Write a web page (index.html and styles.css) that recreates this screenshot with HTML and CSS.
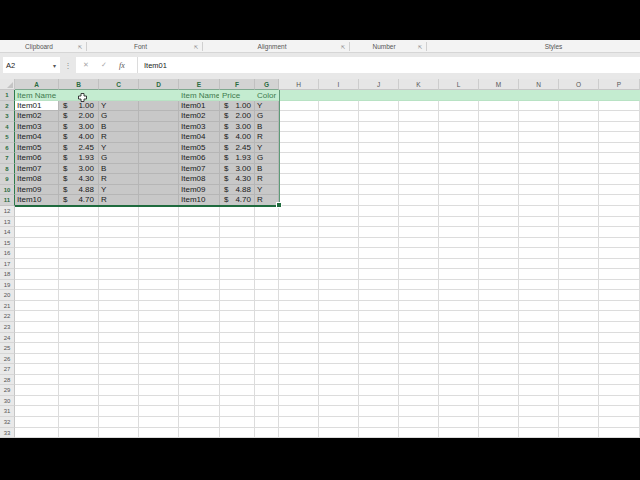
FILE: index.html
```html
<!DOCTYPE html>
<html lang="en">
<head>
  <meta charset="UTF-8">
  <title>Book1 - Excel</title>
  <link rel="stylesheet" href="styles.css">
</head>
<body>
  <div class="screen">
    <div class="topbar"></div>

    <div class="ribbon-labels">
      <div class="group g-clipboard"><span class="label">Clipboard</span><span class="launcher">&#8689;</span></div>
      <div class="group g-font"><span class="label">Font</span><span class="launcher">&#8689;</span></div>
      <div class="group g-align"><span class="label">Alignment</span><span class="launcher">&#8689;</span></div>
      <div class="group g-number"><span class="label">Number</span><span class="launcher">&#8689;</span></div>
      <div class="group g-styles"><span class="label">Styles</span></div>
    </div>

    <div class="formula-band">
      <div class="name-box">
        <span>A2</span>
        <span class="caret">&#9662;</span>
      </div>
      <span class="grip">&#8942;</span>
      <div class="formula-box">
        <div class="fx-buttons">
          <span class="fx-btn">&#10005;</span>
          <span class="fx-btn">&#10003;</span>
          <span class="fx-btn fx">fx</span>
        </div>
        <div class="formula-text">Item01</div>
      </div>
    </div>

    <div class="sheet-wrap">
      <div class="sheet" id="sheet"></div>
      <!-- range outline A1:G11 -->
      <div class="selection"><span class="fill-handle"></span></div>
      <svg class="cursor" width="9" height="9" viewBox="0 0 9 9"><path d="M3 0.5h3v2.5h2.5v3H6v2.5H3V6H0.5V3H3z" fill="#fff" stroke="#111" stroke-width="0.8"/></svg>
    </div>
  </div>

  <script>
    const sheet = document.getElementById('sheet');
    const cols = ['A', 'B', 'C', 'D', 'E', 'F', 'G', 'H', 'I', 'J', 'K', 'L', 'M', 'N', 'O', 'P'];

    const items = [
      ['Item01', '1.00', 'Y'],
      ['Item02', '2.00', 'G'],
      ['Item03', '3.00', 'B'],
      ['Item04', '4.00', 'R'],
      ['Item05', '2.45', 'Y'],
      ['Item06', '1.93', 'G'],
      ['Item07', '3.00', 'B'],
      ['Item08', '4.30', 'R'],
      ['Item09', '4.88', 'Y'],
      ['Item10', '4.70', 'R']
    ];

    function cell(className, html) {
      const div = document.createElement('div');
      div.className = className;
      if (html) div.innerHTML = html;
      sheet.appendChild(div);
    }

    function money(value) {
      return `<span>$</span><span>${value}</span>`;
    }

    // column headers
    cell('corner', '<span class="corner-mark"></span>');
    cols.forEach((c, i) => cell(i < 7 ? 'col-head selected' : 'col-head', c));

    // rows
    for (let r = 1; r <= 33; r++) {
      cell(r <= 11 ? 'row-head selected' : 'row-head', r);

      cols.forEach((c, i) => {
        let cls = 'cell';
        let content = '';

        if (r === 1) {
          cls += ' title-row';
          if (c === 'A' || c === 'E') content = 'Item Name';
          if (c === 'F') content = 'Price';
          if (c === 'G') content = 'Color';
        } else if (r <= 11) {
          const item = items[r - 2];
          if (i < 7) cls += r === 2 && c === 'A' ? ' active' : ' in-range';
          if (c === 'A' || c === 'E') content = item[0];
          if (c === 'B') { cls += ' money wide'; content = money(item[1]); }
          if (c === 'F') { cls += ' money'; content = money(item[1]); }
          if (c === 'C' || c === 'G') content = item[2];
        }

        cell(cls, content);
      });
    }
  </script>
</body>
</html>
```

FILE: styles.css
```css
body {
  margin: 0;
  background-color: #000;
  font-family: "Liberation Sans", Arial, sans-serif;
}

.screen {
  width: 640px;
  height: 480px;
  overflow: hidden;
  background-color: #000;
}

.topbar {
  height: 40px;
}

/* ribbon group captions */
.ribbon-labels {
  display: flex;
  height: 12px;
  background-color: #f3f3f3;
  border-bottom: 1px solid #d6d6d6;
  font-size: 6.5px;
  color: #555;
}

.group {
  display: flex;
  align-items: center;
  border-right: 1px solid #d0d0d0;
  margin: 2px 0 1px;
}

.group .label {
  flex: 1;
  text-align: center;
}

.group .launcher {
  width: 8px;
  font-size: 5px;
  color: #8a8a8a;
}

.g-clipboard { width: 86px; }
.g-font { width: 115px; }
.g-align { width: 146px; }
.g-number { width: 76px; }
.g-styles { flex: 1; border-right: none; padding-left: 40px; }

/* name box and formula bar */
.formula-band {
  display: flex;
  align-items: center;
  height: 26px;
  padding: 0 0 2px 3px;
  box-sizing: border-box;
  background-color: #e8e8e8;
}

.name-box {
  display: flex;
  align-items: center;
  justify-content: space-between;
  width: 57px;
  height: 16px;
  padding: 0 4px 0 3px;
  box-sizing: border-box;
  background-color: #fff;
  font-size: 7.5px;
  color: #222;
}

.name-box .caret {
  font-size: 6px;
  color: #555;
}

.grip {
  width: 16px;
  text-align: center;
  font-size: 8px;
  color: #8f8f8f;
}

.formula-box {
  flex: 1;
  display: flex;
  align-items: center;
  height: 16px;
  background-color: #fff;
}

.fx-buttons {
  display: flex;
  align-items: center;
  gap: 12px;
  width: 62px;
  height: 16px;
  padding-left: 7px;
  box-sizing: border-box;
  border-right: 1px solid #dcdcdc;
}

.fx-btn {
  font-size: 7px;
  color: #a8a8a8;
}

.fx-btn.fx {
  font-family: "Liberation Serif", serif;
  font-style: italic;
  color: #555;
  font-size: 8px;
}

.formula-text {
  padding-left: 6px;
  font-size: 7.5px;
  color: #222;
}

/* worksheet grid */
.sheet-wrap {
  position: relative;
}

.sheet {
  display: grid;
  grid-template-columns: 15px 44px 40px 40px 40px 41px 35px 24px repeat(8, 40px) 41px;
  grid-template-rows: 11px repeat(33, 10.55px);
  background-color: #fff;
  font-size: 8px;
  color: #1a1a1a;
}

.sheet > div {
  box-sizing: border-box;
  overflow: hidden;
  white-space: nowrap;
}

.corner {
  background-color: #e6e6e6;
  border-right: 1px solid #c6c6c6;
  border-bottom: 1px solid #c6c6c6;
  position: relative;
}

.corner-mark {
  position: absolute;
  right: 1px;
  bottom: 1px;
  border-left: 6px solid transparent;
  border-bottom: 6px solid #c4c4c4;
}

.col-head {
  background-color: #e6e6e6;
  border-right: 1px solid #cdcdcd;
  border-bottom: 1px solid #c6c6c6;
  text-align: center;
  font-size: 6.5px;
  line-height: 11px;
  color: #555;
}

.col-head.selected {
  background-color: #d3d3d3;
  border-right-color: #c0c0c0;
  border-bottom: 1px solid #7fa88f;
  color: #2a6b40;
  font-weight: bold;
}

.row-head {
  background-color: #e9e9e9;
  border-right: 1px solid #c6c6c6;
  border-bottom: 1px solid #d6d6d6;
  text-align: center;
  font-size: 6px;
  line-height: 10px;
  color: #555;
}

.row-head.selected {
  background-color: #d3d3d3;
  border-right: 1px solid #2f7a4b;
  border-bottom-color: #c4c4c4;
  color: #2a6b40;
  font-weight: bold;
}

.cell {
  border-right: 1px solid #dcdcdc;
  border-bottom: 1px solid #dcdcdc;
  padding-left: 2px;
  line-height: 10px;
}

.cell.title-row {
  padding-top: 1px;
  background-color: #c4ecd0;
  border-right-color: #c4ecd0;
  border-bottom-color: #b8e2c4;
  color: #3e7a4e;
}

.cell.in-range {
  background-color: #c8c8c8;
  border-right-color: #b6b6b6;
  border-bottom-color: #b6b6b6;
}

.cell.active {
  background-color: #fff;
  border-right-color: #b6b6b6;
  border-bottom-color: #b6b6b6;
}

.cell.money {
  display: flex;
  justify-content: space-between;
  padding: 0 3px 0 4px;
}

.cell.money.wide {
  padding-right: 4px;
}

.selection {
  position: absolute;
  left: 15px;
  top: 11px;
  width: 265px;
  height: 117px;
  box-sizing: border-box;
  border-right: 1px solid #5f9a78;
  border-bottom: 2px solid #1f6b3e;
  pointer-events: none;
}

.fill-handle {
  position: absolute;
  right: -3px;
  bottom: -3px;
  width: 4px;
  height: 4px;
  background-color: #1f6b3e;
  border: 1px solid #fff;
}

.cursor {
  position: absolute;
  left: 78px;
  top: 14px;
}
```
